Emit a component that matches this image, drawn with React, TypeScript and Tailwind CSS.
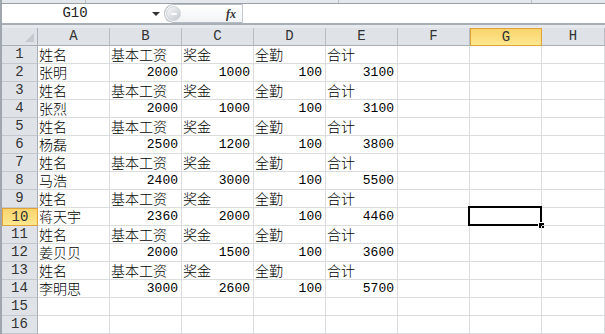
const cols = ["A", "B", "C", "D", "E", "F", "G", "H"];

const head = ["姓名", "基本工资", "奖金", "全勤", "合计"];
const people: [string, number, number, number, number][] = [
  ["张明", 2000, 1000, 100, 3100],
  ["张烈", 2000, 1000, 100, 3100],
  ["杨磊", 2500, 1200, 100, 3800],
  ["马浩", 2400, 3000, 100, 5500],
  ["蒋天宇", 2360, 2000, 100, 4460],
  ["姜贝贝", 2000, 1500, 100, 3600],
  ["李明思", 3000, 2600, 100, 5700],
];

type Cell = string | number | null;

const rows: Cell[][] = [];
people.forEach((p) => {
  rows.push([...head, null, null, null]);
  rows.push([...p, null, null, null]);
});
rows.push([null, null, null, null, null, null, null, null]);
rows.push([null, null, null, null, null, null, null, null]);

const cellFont = { fontFamily: '"Noto Sans CJK SC", "Liberation Sans", sans-serif' };
const monoFont = { fontFamily: '"Liberation Mono", "DejaVu Sans Mono", monospace' };

function FormulaBar() {
  return (
    <div>
      <div className="h-[4px] bg-[#e4e8ed] border-b border-[#9aa1a9] flex">
        <div className="w-[84px] border-r border-[#b9bfc6]" />
        <div className="w-[253px] border-r border-[#b9bfc6]" />
        <div className="w-[193px] border-r border-[#b9bfc6]" />
      </div>
      <div className="h-[19px] bg-white flex items-stretch">
        <div className="w-[146px] flex items-center justify-center text-[14px] text-[#222]" style={monoFont}>
          G10
        </div>
        <div className="w-[16px] flex items-center justify-center">
          <div className="w-0 h-0 border-l-[4px] border-r-[4px] border-t-[4px] border-l-transparent border-r-transparent border-t-[#333]" />
        </div>
        <div className="w-[79px] rounded-l-full border-l border-t border-b border-[#b7bdc4] bg-gradient-to-b from-white to-[#f1f3f5] flex items-center border-r border-r-[#c4c9cf]">
          <div className="ml-[1px] w-[15px] h-[15px] rounded-full bg-gradient-to-br from-[#f6f7f8] to-[#c5cad0] border border-[#d0d4d9] flex items-center justify-center">
            <div className="w-[6px] h-[2px] bg-white/90 rounded" />
          </div>
          <div className="flex-1" />
          <span className="mr-[6px] italic font-bold text-[12px] text-[#333]" style={{ fontFamily: '"Liberation Serif", serif' }}>
            fx
          </span>
        </div>
        <div className="flex-1 bg-white" />
      </div>
      <div className="h-[5px] bg-[#e6e9ed] border-t-2 border-[#a8aeb5]" />
    </div>
  );
}

function Sheet() {
  return (
    <div className="grid grid-cols-[36px_repeat(7,72px)_1fr] auto-rows-[18px] bg-white">
      <div className="bg-[#dfe3e8] border-r border-b border-[#a9afb6] relative">
        <svg className="absolute right-[3px] bottom-[3px]" width="9" height="9" viewBox="0 0 9 9">
          <polygon points="9,0 9,9 0,9" fill="#c4c9cf" />
        </svg>
      </div>
      {cols.map((c) =>
        c === "G" ? (
          <div
            key={c}
            className="bg-gradient-to-b from-[#f9d46c] to-[#fde78f] border border-[#e2a23a] flex items-center justify-center text-[14px] text-[#333]"
            style={monoFont}
          >
            {c}
          </div>
        ) : (
          <div
            key={c}
            className="bg-[#dfe3e8] border-r border-b border-r-[#b8bdc3] border-b-[#a9afb6] flex items-center justify-center text-[14px] text-[#333]"
            style={monoFont}
          >
            {c}
          </div>
        )
      )}
      {rows.map((r, ri) => (
        <Row key={ri} n={ri + 1} cells={r} />
      ))}
    </div>
  );
}

function Row({ n, cells }: { n: number; cells: Cell[] }) {
  const sel = n === 10;
  return (
    <>
      {sel ? (
        <div className="bg-gradient-to-b from-[#f9d46c] to-[#fde78f] border border-[#e2a23a] flex items-center justify-center text-[14px] text-[#333]" style={monoFont}>
          {n}
        </div>
      ) : (
        <div className="bg-[#dfe3e8] border-r border-b border-r-[#a9afb6] border-b-[#c3c8ce] flex items-center justify-center text-[14px] text-[#333]" style={monoFont}>
          {n}
        </div>
      )}
      {cells.map((v, ci) => {
        const isNum = typeof v === "number";
        const active = sel && ci === 6;
        return (
          <div
            key={ci}
            className={
              "relative border-r border-b border-[#dadcdd] flex items-end pb-[1px] whitespace-nowrap " +
              (isNum ? "justify-end pr-[3px]" : "justify-start pl-[1px]")
            }
          >
            {v !== null &&
              (isNum ? (
                <span className="text-[13px] leading-[15px] text-black" style={monoFont}>
                  {v}
                </span>
              ) : (
                <span className="text-[14px] leading-[16px] font-light text-black" style={cellFont}>
                  {v}
                </span>
              ))}
            {active && (
              <>
                <div className="absolute left-[-2px] top-[-2px] w-[74px] h-[20px] border-2 border-black" />
                <div className="absolute right-[-4px] bottom-[-4px] w-[7px] h-[7px] bg-black border border-white" />
              </>
            )}
          </div>
        );
      })}
    </>
  );
}

export default function App() {
  return (
    <div className="w-[605px] h-[334px] overflow-hidden bg-white border-l-2 border-[#9fa6ae]" style={cellFont}>
      <FormulaBar />
      <Sheet />
    </div>
  );
}
